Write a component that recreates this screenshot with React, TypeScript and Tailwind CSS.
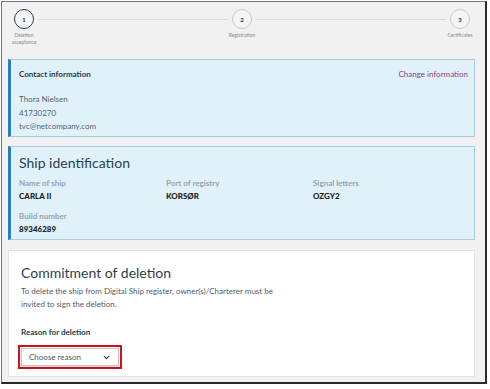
import { ChevronDown } from "lucide-react";

const font = { fontFamily: "Lato, 'Open Sans', sans-serif" };

function Step({ n, label, active }: { n: number; label: string; active?: boolean }) {
  return (
    <div className="flex w-[20px] shrink-0 flex-col items-center">
      <div
        className={`flex h-[20px] w-[20px] items-center justify-center rounded-full bg-[#f4f4f4] text-[6px] font-bold text-[#333] ${
          active ? "border-[1.5px] border-[#2c3e5e]" : "border border-[#c9c9c9]"
        }`}
      >
        {n}
      </div>
      <p className="mt-[3px] w-[34px] text-center text-[5px] leading-[7px] text-[#8a8a8a]">{label}</p>
    </div>
  );
}

function Field({ label, value }: { label: string; value: string }) {
  return (
    <div>
      <p className="text-[8px] font-bold leading-[13px] text-[#94a3ae]">{label}</p>
      <p className="text-[8px] font-black leading-[13px] text-[#1d1d1d]">{value}</p>
    </div>
  );
}

export default function App() {
  return (
    <div style={font} className="h-[389px] w-[490px] bg-white pl-[1px] pt-[1px]">
      <div className="h-[383px] w-[486px] overflow-hidden border-l border-t border-b-2 border-r-2 border-l-[#777] border-t-[#777] border-b-[#2a2a2a] border-r-[#2a2a2a] bg-[#f1f1f1] pl-[6px] pr-[10px]">
        {/* stepper */}
        <div className="flex items-start pl-[6px] pr-[5px] pt-[7px]">
          <Step n={1} label="Deletion acceptance" active />
          <div className="mx-[4px] mt-[10px] h-px flex-1 bg-[#dadada]" />
          <Step n={2} label="Registration" />
          <div className="mx-[4px] mt-[10px] h-px flex-1 bg-[#dadada]" />
          <Step n={3} label="Certificates" />
        </div>

        {/* contact */}
        <div className="mt-[13px] flex h-[78px] border border-l-[3px] border-[#a6cbe3] border-l-[#2a7fc1] bg-[#e1f1fa] pl-[8px] pr-[6px] pt-[8px]">
          <div className="flex-1">
            <p className="text-[8px] font-bold leading-[13px] text-[#233c4c]">Contact information</p>
            <div className="mt-[12px] text-[8px] leading-[13.5px] text-[#56646f]">
              <p>Thora Nielsen</p>
              <p>41730270</p>
              <p>tvc@netcompany.com</p>
            </div>
          </div>
          <a className="text-[8px] leading-[13px] text-[#8d3c8e]">Change information</a>
        </div>

        {/* ship */}
        <div className="mt-[9px] h-[94px] border border-l-[3px] border-[#a6cbe3] border-l-[#2a7fc1] bg-[#e1f1fa] pl-[8px] pt-[6px]">
          <h2 className="text-[14px] leading-[20px] text-[#2b3f4e]">Ship identification</h2>
          <div className="mt-[4px] grid grid-cols-[147px_147px_147px] gap-y-[7px]">
            <Field label="Name of ship" value="CARLA II" />
            <Field label="Port of registry" value="KORSØR" />
            <Field label="Signal letters" value="OZGY2" />
            <Field label="Build number" value="89346289" />
          </div>
        </div>

        {/* commitment */}
        <div className="mt-[10px] h-[127px] border border-[#e3e3e3] bg-white pl-[12px] pt-[12px]">
          <h2 className="text-[14px] leading-[20px] text-[#2b3f4e]">Commitment of deletion</h2>
          <p className="mt-[2px] w-[260px] text-[8px] leading-[13px] text-[#4e5d69]">
            To delete the ship from Digital Ship register, owner(s)/Charterer must be invited to sign the deletion.
          </p>
          <p className="mt-[15px] text-[8px] font-bold leading-[13px] text-[#233c4c]">Reason for deletion</p>
          <div className="ml-[-3px] mt-[6px] w-[104px] border-2 border-[#d0101a] p-[1px]">
            <div className="flex h-[18px] items-center justify-between border border-[#c8c8c8] bg-white pl-[7px] pr-[7px] shadow-[0_1px_1px_rgba(0,0,0,0.15)]">
              <span className="text-[8px] text-[#555]">Choose reason</span>
              <ChevronDown size={9} strokeWidth={3} className="text-[#333]" />
            </div>
          </div>
        </div>
      </div>
    </div>
  );
}
